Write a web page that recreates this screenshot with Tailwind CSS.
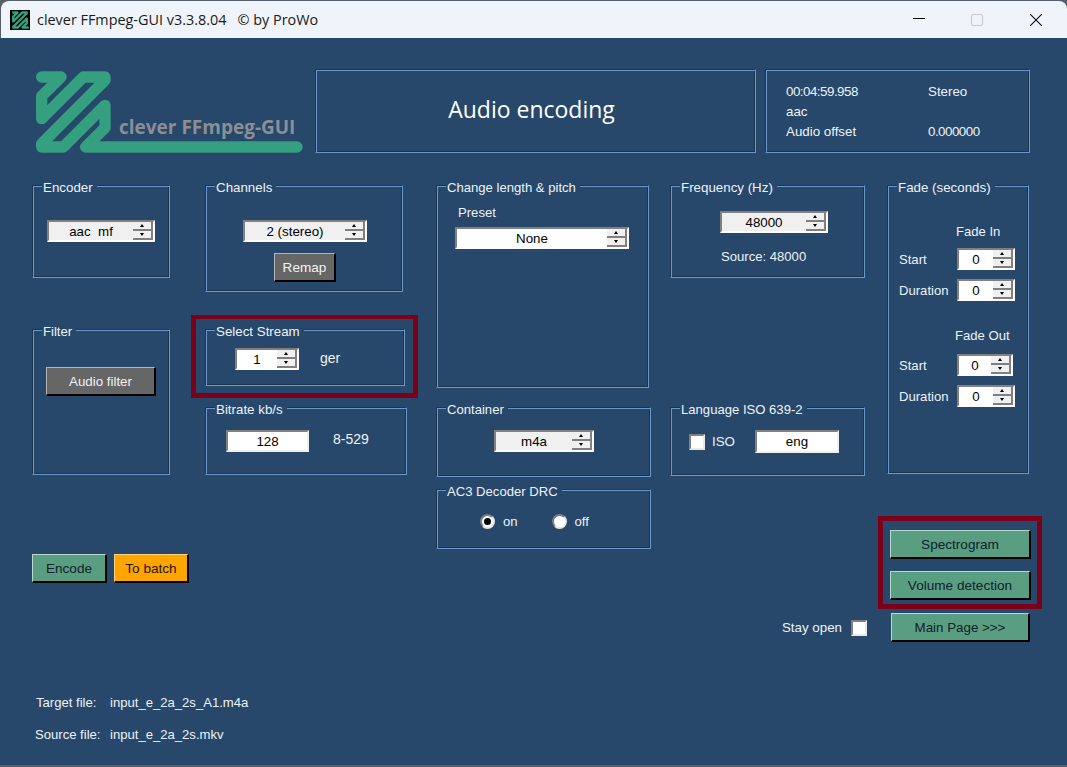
<!DOCTYPE html>
<html lang="en">
<head>
    <meta charset="UTF-8">
    <title>clever FFmpeg-GUI</title>
    <script src="https://cdn.jsdelivr.net/npm/@tailwindcss/browser@4"></script>
</head>
<body class="bg-[#55606a] overflow-hidden">
<div class="w-[1067px] h-[767px] pl-px pt-px pb-[2px] flex flex-col font-['Liberation_Sans',sans-serif] text-[13.1px] leading-[15px] text-[#eef3f8]">

    <!-- title bar -->
    <div class="h-[37px] shrink-0 bg-[#eef4f9] rounded-t-[8px] flex items-center text-[#1a1a1a]">
        <svg class="ml-[9px] w-[20px] h-[20px] bg-black" viewBox="0 0 260 282">
            <polyline points="35,36 93,36 35,94 35,161 160,36 225,36 225,46 35,236 35,246 100,246 225,121 225,188 167,246 240,246" fill="none" stroke="#34a07f" stroke-width="34" stroke-linejoin="round" stroke-linecap="round"/>
        </svg>
        <span class="ml-[7px] font-['Open_Sans',sans-serif] text-[14.4px] whitespace-pre">clever FFmpeg-GUI v3.3.8.04   © by ProWo</span>
        <div class="ml-auto flex items-center">
            <div class="w-[12px] h-px bg-black mr-[46px] -mt-[2px]"></div>
            <div class="w-[12px] h-[12px] border border-[#c8c8c8] rounded-[2px] mr-[47px]"></div>
            <svg class="w-[12px] h-[12px] mr-[25px]" viewBox="0 0 12 12"><path d="M0 0L12 12M12 0L0 12" stroke="#111" stroke-width="1.1"/></svg>
        </div>
    </div>

    <main class="flex-1 bg-[#27476b] -ml-px flex flex-col">
        <!-- header row -->
        <div class="flex mt-[31px] h-[84px] shrink-0">
            <div class="relative w-[315px] shrink-0">
                <svg class="absolute left-[30px] -top-[4px]" width="280" height="95" viewBox="0 0 840 285">
                    <polyline points="35,36 93,36 35,94 35,161 160,36 225,36 225,46 35,236 35,246 100,246 225,121 225,188 167,246 801,246" fill="none" stroke="#34a07f" stroke-width="34" stroke-linejoin="round" stroke-linecap="round"/>
                </svg>
                <span class="absolute left-[119px] top-[46px] font-['Open_Sans',sans-serif] font-bold text-[19px] leading-[24px] text-[#8b8f93] whitespace-nowrap">clever FFmpeg-GUI</span>
            </div>
            <div class="w-[441px] h-[84px] border border-t-[#1c3450] border-l-[#1c3450] border-r-[#6c97c8] border-b-[#6c97c8] shadow-[inset_1px_1px_0_#6c97c8,inset_-1px_-1px_0_#1c3450] pr-[8px] pb-[3px] flex items-center justify-center font-['Open_Sans',sans-serif] text-[23px] text-white">Audio encoding</div>
            <div class="ml-[9px] w-[265px] h-[84px] border border-t-[#1c3450] border-l-[#1c3450] border-r-[#6c97c8] border-b-[#6c97c8] shadow-[inset_1px_1px_0_#6c97c8,inset_-1px_-1px_0_#1c3450] pl-[20px] pt-[12px] grid grid-cols-[142px_1fr] auto-rows-[20px] text-[13.33px]">
                <span class="leading-[20px] tracking-[-0.5px]">00:04:59.958</span><span class="leading-[20px]">Stereo</span>
                <span class="leading-[20px]">aac</span><span></span>
                <span class="leading-[20px]">Audio offset</span><span class="leading-[20px] tracking-[-0.5px]">0.000000</span>
            </div>
        </div>

        <!-- group columns -->
        <div class="flex mt-[25px] pl-[32px]">
            <!-- column 1 -->
            <div class="w-[138px] shrink-0 flex flex-col">
                <fieldset class="h-[100px] border border-t-[#1c3450] border-l-[#1c3450] border-r-[#6c97c8] border-b-[#6c97c8] shadow-[inset_1px_1px_0_#6c97c8,inset_-1px_-1px_0_#1c3450]">
                    <legend class="ml-[9px] pl-px pr-[4px] bg-[#27476b] translate-y-[2px] text-[13.33px]">Encoder</legend>
                    <div class="spin mt-[27px] ml-[14px] w-[108px] bg-[#f0f0f0]" data-value="aac  mf"></div>
                </fieldset>
                <fieldset class="mt-[44px] h-[153px] border border-t-[#1c3450] border-l-[#1c3450] border-r-[#6c97c8] border-b-[#6c97c8] shadow-[inset_1px_1px_0_#6c97c8,inset_-1px_-1px_0_#1c3450]">
                    <legend class="ml-[9px] pl-px pr-[4px] bg-[#27476b] translate-y-[2px]">Filter</legend>
                    <button class="mt-[30px] ml-[13px] w-[110px] h-[29px] bg-[#666666] border-t border-l border-t-[#b5b5b5] border-l-[#b5b5b5] border-b-2 border-r-2 border-b-black border-r-black text-[13.33px] text-[#eef3f8]">Audio filter</button>
                </fieldset>
                <div class="mt-[79px] flex gap-[7px]">
                    <button class="shrink-0 w-[75px] h-[29px] bg-[#5a9e82] border-t border-l border-t-[#b7d8ca] border-l-[#b7d8ca] border-b-2 border-r-2 border-b-black border-r-black text-[13.6px] text-[#11202a]">Encode</button>
                    <button class="shrink-0 w-[75px] h-[29px] bg-[#ffa500] border-t border-l border-t-[#ffd27a] border-l-[#ffd27a] border-b-2 border-r-2 border-b-black border-r-black text-[13.6px] text-[#1c1400]">To batch</button>
                </div>
            </div>

            <!-- column 2 -->
            <div class="ml-[35px] w-[202px] shrink-0 flex flex-col">
                <fieldset class="w-[198px] h-[114px] border border-t-[#1c3450] border-l-[#1c3450] border-r-[#6c97c8] border-b-[#6c97c8] shadow-[inset_1px_1px_0_#6c97c8,inset_-1px_-1px_0_#1c3450]">
                    <legend class="ml-[9px] pl-px pr-[4px] bg-[#27476b] translate-y-[2px] text-[13.33px]">Channels</legend>
                    <div class="spin mt-[27px] ml-[37px] w-[124px] bg-[#f0f0f0]" data-value="2 (stereo)"></div>
                    <button class="block mt-[11px] ml-[68px] w-[62px] h-[29px] bg-[#666666] border-t border-l border-t-[#b5b5b5] border-l-[#b5b5b5] border-b-2 border-r-2 border-b-black border-r-black text-[13.6px] text-[#eef3f8]">Remap</button>
                </fieldset>
                <div class="mt-[23px] -ml-[14px] w-[227px] h-[83px] shrink-0 border-[5px] border-t-4 border-[#7d0019] pl-[9px] pt-[3px]">
                    <fieldset class="w-[200px] h-[64px] border border-t-[#1c3450] border-l-[#1c3450] border-r-[#6c97c8] border-b-[#6c97c8] shadow-[inset_1px_1px_0_#6c97c8,inset_-1px_-1px_0_#1c3450]">
                        <legend class="ml-[9px] pl-px pr-[4px] bg-[#27476b] translate-y-[2px] text-[13.33px]">Select Stream</legend>
                        <div class="flex items-center mt-[11px] ml-[29px]">
                            <div class="spin w-[64px] bg-white" data-value="1"></div>
                            <span class="ml-[21px] -mt-[2px] text-[14px]">ger</span>
                        </div>
                    </fieldset>
                </div>
                <fieldset class="mt-[2px] h-[75px] border border-t-[#1c3450] border-l-[#1c3450] border-r-[#6c97c8] border-b-[#6c97c8] shadow-[inset_1px_1px_0_#6c97c8,inset_-1px_-1px_0_#1c3450]">
                    <legend class="ml-[9px] pl-px pr-[4px] bg-[#27476b] translate-y-[2px] text-[13.33px]">Bitrate kb/s</legend>
                    <div class="flex items-center mt-[15px] ml-[20px]">
                        <div class="w-[83px] h-[22px] bg-white border-2 border-t-[#808080] border-l-[#808080] border-r-[#f0f0f0] border-b-[#f0f0f0] text-[13.33px] text-black flex items-center justify-center">128</div>
                        <span class="ml-[24px] -mt-[3px] text-[14px]">8-529</span>
                    </div>
                </fieldset>
            </div>

            <!-- column 3 -->
            <div class="ml-[29px] w-[215px] shrink-0 flex flex-col">
                <fieldset class="w-[213px] h-[210px] border border-t-[#1c3450] border-l-[#1c3450] border-r-[#6c97c8] border-b-[#6c97c8] shadow-[inset_1px_1px_0_#6c97c8,inset_-1px_-1px_0_#1c3450]">
                    <legend class="ml-[9px] pl-px pr-[4px] bg-[#27476b] translate-y-[2px]">Change length &amp; pitch</legend>
                    <div class="mt-[12px] ml-[21px]">Preset</div>
                    <div class="spin mt-[7px] ml-[18px] w-[174px] bg-white" data-value="None"></div>
                </fieldset>
                <fieldset class="mt-[12px] h-[77px] border border-t-[#1c3450] border-l-[#1c3450] border-r-[#6c97c8] border-b-[#6c97c8] shadow-[inset_1px_1px_0_#6c97c8,inset_-1px_-1px_0_#1c3450]">
                    <legend class="ml-[9px] pl-px pr-[4px] bg-[#27476b] translate-y-[2px]">Container</legend>
                    <div class="spin mt-[15px] ml-[57px] w-[100px] bg-[#f0f0f0]" data-value="m4a"></div>
                </fieldset>
                <fieldset class="mt-[5px] h-[67px] border border-t-[#1c3450] border-l-[#1c3450] border-r-[#6c97c8] border-b-[#6c97c8] shadow-[inset_1px_1px_0_#6c97c8,inset_-1px_-1px_0_#1c3450]">
                    <legend class="ml-[9px] pl-px pr-[4px] bg-[#27476b] translate-y-[2px]">AC3 Decoder DRC</legend>
                    <div class="flex items-center mt-[17px] ml-[43px]">
                        <div class="w-[15px] h-[15px] rounded-full bg-white border-2 border-t-[#808080] border-l-[#808080] border-r-[#e8e8e8] border-b-[#e8e8e8] flex items-center justify-center"><div class="w-[7px] h-[7px] rounded-full bg-black"></div></div>
                        <span class="ml-[8px]">on</span>
                        <div class="ml-[34px] w-[15px] h-[15px] rounded-full bg-white border-2 border-t-[#808080] border-l-[#808080] border-r-[#e8e8e8] border-b-[#e8e8e8]"></div>
                        <span class="ml-[8px]">off</span>
                    </div>
                </fieldset>
            </div>

            <!-- columns 4 and 5, with the tool buttons under them -->
            <div class="ml-[19px] w-[359px] shrink-0 flex flex-col">
                <div class="flex h-[298px]">
                    <div class="w-[195px] flex flex-col">
                        <fieldset class="h-[100px] border border-t-[#1c3450] border-l-[#1c3450] border-r-[#6c97c8] border-b-[#6c97c8] shadow-[inset_1px_1px_0_#6c97c8,inset_-1px_-1px_0_#1c3450]">
                            <legend class="ml-[9px] pl-px pr-[4px] bg-[#27476b] translate-y-[2px] text-[13.33px]">Frequency (Hz)</legend>
                            <div class="spin mt-[18px] ml-[49px] w-[108px] bg-[#f0f0f0]" data-value="48000"></div>
                            <div class="mt-[16px] ml-[50px]">Source: 48000</div>
                        </fieldset>
                        <fieldset class="mt-[122px] h-[76px] border border-t-[#1c3450] border-l-[#1c3450] border-r-[#6c97c8] border-b-[#6c97c8] shadow-[inset_1px_1px_0_#6c97c8,inset_-1px_-1px_0_#1c3450]">
                            <legend class="ml-[9px] pl-px pr-[4px] bg-[#27476b] translate-y-[2px]">Language ISO 639-2</legend>
                            <div class="flex items-center mt-[15px] ml-[18px]">
                                <div class="w-[16px] h-[16px] bg-white border-2 border-t-[#808080] border-l-[#808080] border-r-[#e8e8e8] border-b-[#e8e8e8]"></div>
                                <span class="ml-[7px] text-[13.33px]">ISO</span>
                                <div class="ml-[20px] w-[84px] h-[23px] bg-white border-2 border-t-[#808080] border-l-[#808080] border-r-[#f0f0f0] border-b-[#f0f0f0] text-[13.33px] text-black flex items-center justify-center">eng</div>
                            </div>
                        </fieldset>
                    </div>
                    <fieldset class="ml-[22px] w-[142px] h-[296px] border border-t-[#1c3450] border-l-[#1c3450] border-r-[#6c97c8] border-b-[#6c97c8] shadow-[inset_1px_1px_0_#6c97c8,inset_-1px_-1px_0_#1c3450]">
                        <legend class="ml-[9px] pl-px pr-[4px] bg-[#27476b] translate-y-[2px] text-[13.33px]">Fade (seconds)</legend>
                        <div class="mt-[31px] ml-[68px]">Fade In</div>
                        <div class="mt-[9px] ml-[11px] flex items-center"><span class="w-[58px]">Start</span><div class="spin w-[58px] bg-white" data-value="0"></div></div>
                        <div class="mt-[9px] ml-[11px] flex items-center"><span class="w-[58px]">Duration</span><div class="spin w-[58px] bg-white" data-value="0"></div></div>
                        <div class="mt-[27px] ml-[67px]">Fade Out</div>
                        <div class="mt-[11px] ml-[11px] flex items-center"><span class="w-[58px]">Start</span><div class="spin w-[56px] bg-white" data-value="0"></div></div>
                        <div class="mt-[9px] ml-[11px] flex items-center"><span class="w-[58px]">Duration</span><div class="spin w-[58px] bg-white" data-value="0"></div></div>
                    </fieldset>
                </div>
                <div class="mt-[40px] self-end -mr-[13px] w-[164px] h-[93px] border-[5px] border-[#7d0019] pl-[7px] pt-[9px] flex flex-col gap-[12px]">
                    <button class="w-[141px] h-[29px] shrink-0 bg-[#5a9e82] border-t border-l border-t-[#b7d8ca] border-l-[#b7d8ca] border-b-2 border-r-2 border-b-black border-r-black text-[13.6px] text-[#11202a]">Spectrogram</button>
                    <button class="w-[141px] h-[29px] shrink-0 bg-[#5a9e82] border-t border-l border-t-[#b7d8ca] border-l-[#b7d8ca] border-b-2 border-r-2 border-b-black border-r-black text-[13.6px] text-[#11202a]">Volume detection</button>
                </div>
                <div class="mt-[4px] flex items-center justify-end -mr-px">
                    <span class="text-[13.33px]">Stay open</span>
                    <div class="ml-[9px] w-[16px] h-[16px] bg-white border-2 border-t-[#808080] border-l-[#808080] border-r-[#e8e8e8] border-b-[#e8e8e8]"></div>
                    <button class="ml-[24px] w-[139px] h-[29px] bg-[#5a9e82] border-t border-l border-t-[#b7d8ca] border-l-[#b7d8ca] border-b-2 border-r-2 border-b-black border-r-black text-[13.33px] text-[#11202a]">Main Page &gt;&gt;&gt;</button>
                </div>
            </div>
        </div>

        <!-- file names -->
        <div class="absolute left-0 top-[693px] pl-[35px] grid grid-cols-[75px_1fr] gap-y-[12px] leading-[20px]">
            <span class="pl-px">Target file:</span><span>input_e_2a_2s_A1.m4a</span>
            <span>Source file:</span><span>input_e_2a_2s.mkv</span>
        </div>
    </main>
</div>

<script>
    // fill in every updown control: value field plus the two small arrow buttons
    document.querySelectorAll('.spin').forEach(function (el) {
        el.className += ' h-[22px] flex border-2 border-t-[#808080] border-l-[#808080] border-r-white border-b-white text-[13.33px] text-black';
        el.innerHTML =
            '<div class="flex-1 flex items-center justify-center whitespace-pre">' + el.dataset.value + '</div>' +
            '<div class="w-[20px] flex flex-col bg-[#f0f0f0]">' +
            '<div class="flex-1 flex items-center justify-center border-r-2 border-b-2 border-[#808080]"><div class="w-0 h-0 border-x-[2.5px] border-x-transparent border-b-[3px] border-b-black"></div></div>' +
            '<div class="flex-1 flex items-center justify-center border-r-2 border-b-2 border-[#808080]"><div class="w-0 h-0 border-x-[2.5px] border-x-transparent border-t-[3px] border-t-black"></div></div>' +
            '</div>';
    });
</script>
</body>
</html>
